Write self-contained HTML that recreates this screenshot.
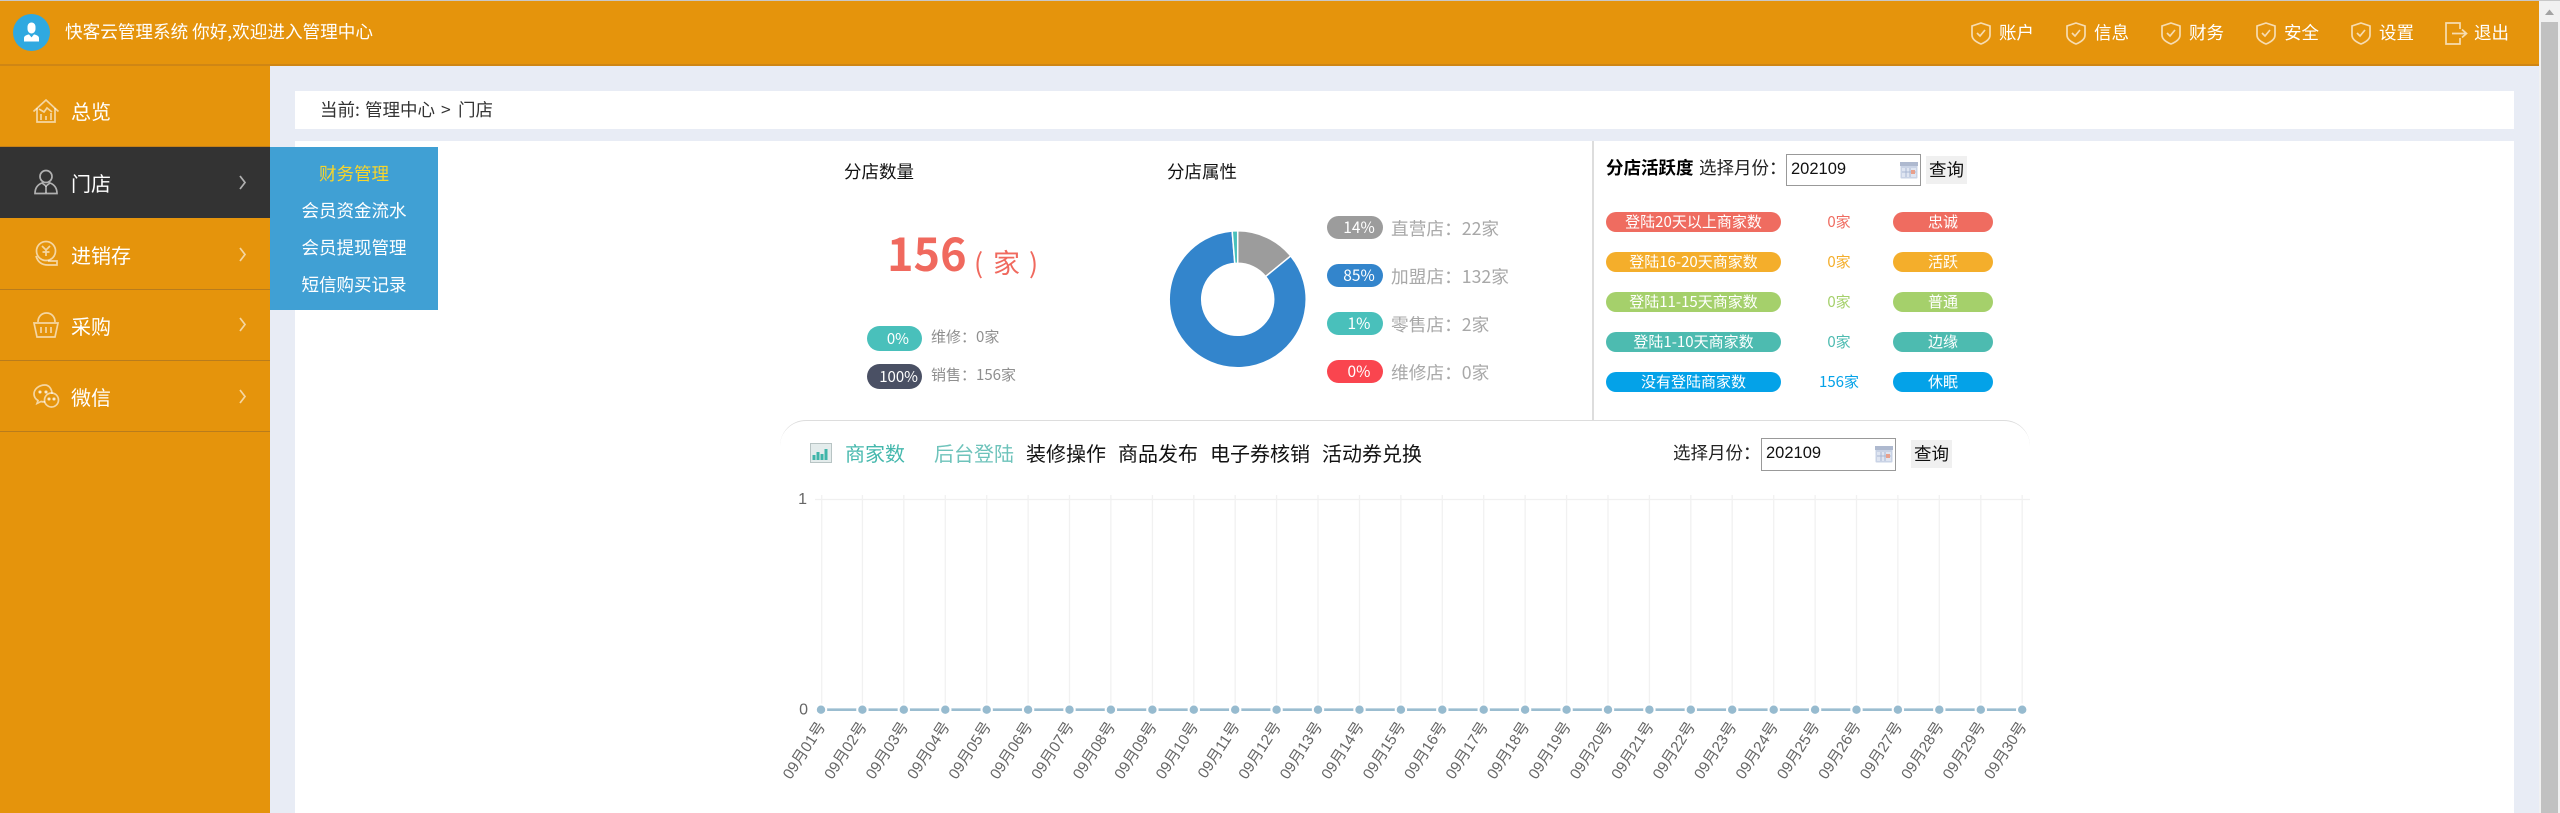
<!DOCTYPE html>
<html lang="zh-CN">
<head>
<meta charset="utf-8">
<title>快客云管理系统</title>
<style>
html,body{margin:0;padding:0}
body{width:2560px;height:813px;position:relative;overflow:hidden;background:#e8ecf5;font-family:"Liberation Sans","Noto Sans CJK SC",sans-serif;font-size:17.5px;color:#111}
.t,.b,svg{position:absolute}
.t{white-space:nowrap;line-height:24px;height:24px}
.c{font-family:"Noto Sans CJK SC","Liberation Sans",sans-serif}
.w{color:#fff}
.m{font-size:20px;color:#fff;left:71px}
.s{font-size:17.5px;color:#fff;left:270px;width:168px;text-align:center}
.n{font-size:17.5px;color:#fff}
.p{position:absolute;color:#fff;text-align:center;white-space:nowrap}
.a{left:1606px;width:175px;height:20px;line-height:20px;border-radius:10px;font-size:15px}
.d{left:1893px;width:100px;height:20px;line-height:20px;border-radius:10px;font-size:15px}
.k{left:1789px;width:100px;text-align:center;font-size:15px}
.l{left:1327px;width:56px;height:23px;line-height:23px;border-radius:12px;font-size:15.5px}
.l span{position:relative;left:4px}
.g{left:1391px;font-size:17.7px;color:#a8a8a8}
.inp{position:absolute;box-sizing:border-box;width:135px;height:32px;border:1.5px solid #999;background:#fff;font-size:16.5px;line-height:29px;padding-left:4px;color:#111}
.btn{position:absolute;width:41px;height:28px;line-height:28px;background:#f0f0f0;text-align:center;font-size:17.5px;color:#111}
.tab{font-size:20px;color:#111}
</style>
</head>
<body>
<div class="b" style="left:0;top:0;width:2560px;height:1px;background:#c8c8c8"></div>
<div class="b" style="left:0;top:1px;width:2539px;height:63px;background:#e5940c"></div>
<div class="b" style="left:0;top:64px;width:2539px;height:2px;background:#cf8614"></div>
<div class="b" style="left:2539px;top:1px;width:21px;height:812px;background:#f1f1f1"></div>
<div class="b" style="left:2541px;top:22px;width:17px;height:791px;background:#c1c1c1"></div>
<svg style="left:2544px;top:9px" width="11" height="7"><path d="M5.5 0.5L10 6H1z" fill="#a3a3a3"/></svg>

<svg style="left:13px;top:14px" width="38" height="38" viewBox="0 0 38 38"><circle cx="18.5" cy="18.5" r="18.5" fill="#2fa9e0"/><path d="M14.500 13c0-6 8-6 8 0v2c0 2.500-2 4.500-4 4.500s-4-2-4-4.500z" fill="#fff"/><path d="M11 27.500v-3.500c0-2 2.500-3 5-3.600l2.500 3 2.500-3c2.500.6 5 1.600 5 3.600v3.500z" fill="#fff"/></svg>
<div class="t c w" style="left:65px;top:20px;font-size:17.6px">快客云管理系统 你好,欢迎进入管理中心</div>

<svg style="left:0;top:0" width="2539" height="66" fill="none" stroke="#fff" stroke-opacity=".68" stroke-width="1.700">
<g><path d="M1981 23l9 3v9c0 4-4 7-9 9c-5-2-9-5-9-9v-9z"/><path d="M1977 33l3 3l5-6"/></g>
<g><path d="M2076 23l9 3v9c0 4-4 7-9 9c-5-2-9-5-9-9v-9z"/><path d="M2072 33l3 3l5-6"/></g>
<g><path d="M2171 23l9 3v9c0 4-4 7-9 9c-5-2-9-5-9-9v-9z"/><path d="M2167 33l3 3l5-6"/></g>
<g><path d="M2266 23l9 3v9c0 4-4 7-9 9c-5-2-9-5-9-9v-9z"/><path d="M2262 33l3 3l5-6"/></g>
<g><path d="M2361 23l9 3v9c0 4-4 7-9 9c-5-2-9-5-9-9v-9z"/><path d="M2357 33l3 3l5-6"/></g>
<path d="M2460 29v-6h-14v21h14v-6"/><path d="M2452 33.500h14M2462 29.500l4.500 4-4.500 4"/>
</svg>
<div class="t c n" style="left:1999px;top:21px">账户</div>
<div class="t c n" style="left:2094px;top:21px">信息</div>
<div class="t c n" style="left:2189px;top:21px">财务</div>
<div class="t c n" style="left:2284px;top:21px">安全</div>
<div class="t c n" style="left:2379px;top:21px">设置</div>
<div class="t c n" style="left:2474px;top:21px">退出</div>

<div class="b" style="left:0;top:66px;width:270px;height:747px;background:#e5940c"></div>
<div class="b" style="left:0;top:146px;width:270px;height:1px;background:#c4801a"></div>
<div class="b" style="left:0;top:147px;width:270px;height:71px;background:#333"></div>
<div class="b" style="left:0;top:289px;width:270px;height:1px;background:#b97c1c"></div>
<div class="b" style="left:0;top:360px;width:270px;height:1px;background:#b97c1c"></div>
<div class="b" style="left:0;top:431px;width:270px;height:1px;background:#b97c1c"></div>

<svg style="left:0;top:66px" width="270" height="370" viewBox="0 66 270 370" fill="none" stroke="#fff" stroke-opacity=".62" stroke-width="1.700">
<path d="M33.500 111.500L46 100l12.500 11.500"/><path d="M37 108v14h18v-14"/><path d="M41 120v-6M46 120v-4M51 120v-7M39 109l5 3 3-4 5 4"/>
<circle cx="46" cy="176.500" r="6"/><path d="M35 193.500c0-6 3-9 7-10.500l4 3 4-3c4 1.500 7 4.500 7 10.500z"/><path d="M46 186v7"/>
<circle cx="46" cy="251" r="9.500"/><path d="M42 246l4 4 4-4M46 250v6M42.500 252h7M36 256c2 7 7 9 12 9h9v-4h-9"/>
<path d="M38 322c0-12 17-12 17 0"/><path d="M34 323h24l-3 14H37z"/><path d="M41 327v6M46 327v6M51 327v6"/>
<path d="M45 385c-6 0-11 4-11 9c0 3 1.500 5 4 6.500l-1 3 4-2c1 .3 2 .4 4 .4"/><path d="M52 394c0-5-3-9-7-9"/><circle cx="51.500" cy="400" r="7"/><circle cx="40" cy="392" r=".8" fill="#fff"/><circle cx="46" cy="392" r=".8" fill="#fff"/><circle cx="49" cy="399" r=".8" fill="#fff"/><circle cx="54" cy="399" r=".8" fill="#fff"/>
<path d="M240 176l5 6.500-5 6.500M240 248l5 6.500-5 6.500M240 318l5 6.500-5 6.500M240 390l5 6.500-5 6.500"/>
</svg>
<div class="t c m" style="top:99px">总览</div>
<div class="t c m" style="top:171px">门店</div>
<div class="t c m" style="top:243px">进销存</div>
<div class="t c m" style="top:314px">采购</div>
<div class="t c m" style="top:385px">微信</div>

<div class="b" style="left:295px;top:91px;width:2219px;height:38px;background:#fff"></div>
<div class="t c" style="left:320px;top:98px;color:#333">当前:</div>
<div class="t c" style="left:365px;top:98px;color:#333">管理中心</div>
<div class="t c" style="left:441px;top:98px;color:#333">&gt;</div>
<div class="t c" style="left:458px;top:98px;color:#333">门店</div>
<div class="b" style="left:295px;top:141px;width:2219px;height:672px;background:#fff"></div>

<div class="b" style="left:270px;top:147px;width:168px;height:163px;background:#40a0d4"></div>
<div class="t c s" style="top:162px;color:#f7d52b">财务管理</div>
<div class="t c s" style="top:199px">会员资金流水</div>
<div class="t c s" style="top:236px">会员提现管理</div>
<div class="t c s" style="top:273px">短信购买记录</div>

<div class="t c" style="left:844px;top:160px">分店数量</div>
<div class="t c" style="left:1167px;top:160px">分店属性</div>
<div class="t c" style="left:887px;top:224px;height:56px;line-height:56px;font-size:45px;font-weight:700;color:#f0695e">156</div>
<div class="t c" style="left:974px;top:246px;height:32px;line-height:32px;font-size:27px;color:#f0695e">(</div>
<div class="t c" style="left:993px;top:246px;height:32px;line-height:32px;font-size:27px;color:#f0695e">家</div>
<div class="t c" style="left:1029px;top:246px;height:32px;line-height:32px;font-size:27px;color:#f0695e">)</div>

<div class="p c" style="left:867px;top:326px;width:42px;padding-right:13px;height:25px;line-height:25px;border-radius:12.500px;background:#49c0bb;font-size:15px;text-align:right">0%</div>
<div class="p c" style="left:867px;top:364px;width:51px;padding-right:4px;height:25px;line-height:25px;border-radius:12.500px;background:#4a5064;font-size:15px;text-align:right">100%</div>
<div class="t c" style="left:931px;top:325px;font-size:15px;color:#8f8f8f">维修：0家</div>
<div class="t c" style="left:931px;top:363px;font-size:15px;color:#8f8f8f">销售：156家</div>

<svg style="left:0;top:0" width="1400" height="400" stroke="#fff" stroke-width="1.500">
<path fill="#9c9c9c" d="M1237.700 230.800A68.500 68.500 0 0 1 1290.760 255.970L1265.590 276.530A36 36 0 0 0 1237.700 263.300Z"/>
<path fill="#3385cc" d="M1290.760 255.970A68.500 68.500 0 1 1 1232.180 231.020L1234.800 263.420A36 36 0 1 0 1265.590 276.530Z"/>
<path fill="#49c0bb" d="M1232.180 231.020A68.500 68.500 0 0 1 1237.700 230.800L1237.700 263.300A36 36 0 0 0 1234.800 263.420Z"/>
</svg>

<div class="p c l" style="top:216px;background:#9c9c9c"><span>14%</span></div>
<div class="p c l" style="top:264px;background:#3385cc"><span>85%</span></div>
<div class="p c l" style="top:312px;background:#49c0bb"><span>1%</span></div>
<div class="p c l" style="top:360px;background:#fa454f"><span>0%</span></div>
<div class="t c g" style="top:216px">直营店：22家</div>
<div class="t c g" style="top:264px">加盟店：132家</div>
<div class="t c g" style="top:312px">零售店：2家</div>
<div class="t c g" style="top:360px">维修店：0家</div>

<div class="b" style="left:1592px;top:141px;width:1.500px;height:279px;background:#ddd"></div>
<div class="t c" style="left:1606px;top:156px;font-weight:700;color:#000">分店活跃度</div>
<div class="t c" style="left:1699px;top:156px;color:#222">选择月份：</div>
<div class="inp" style="left:1786px;top:154px">202109</div>
<svg style="left:1900px;top:162px" width="18" height="17"><rect x=".5" y=".5" width="17" height="16" rx="1" fill="#c9d3e6"/><rect x="0" y="0" width="18" height="4" fill="#aeb9cf"/><path d="M2 6h14v9H2z" fill="#dfe5f1"/><path d="M6 6v9M10 6v9M2 10h14" stroke="#a9b6d2" fill="none"/><rect x="11" y="8" width="4" height="4" fill="#e8a08c"/></svg>
<div class="btn c" style="left:1926px;top:156px">查询</div>

<div class="p c a" style="top:212px;background:#ef6c60">登陆20天以上商家数</div>
<div class="p c a" style="top:252px;background:#f4ae2b">登陆16-20天商家数</div>
<div class="p c a" style="top:292px;background:#a5d06b">登陆11-15天商家数</div>
<div class="p c a" style="top:332px;background:#4dbbb0">登陆1-10天商家数</div>
<div class="p c a" style="top:372px;background:#04a2e8">没有登陆商家数</div>
<div class="t c k" style="top:210px;color:#ef6c60">0家</div>
<div class="t c k" style="top:250px;color:#f4ae2b">0家</div>
<div class="t c k" style="top:290px;color:#a5d06b">0家</div>
<div class="t c k" style="top:330px;color:#4dbbb0">0家</div>
<div class="t c k" style="top:370px;color:#04a2e8">156家</div>
<div class="p c d" style="top:212px;background:#ef6c60">忠诚</div>
<div class="p c d" style="top:252px;background:#f4ae2b">活跃</div>
<div class="p c d" style="top:292px;background:#a5d06b">普通</div>
<div class="p c d" style="top:332px;background:#4dbbb0">边缘</div>
<div class="p c d" style="top:372px;background:#04a2e8">休眠</div>

<div class="b" style="left:780px;top:420px;width:1250px;height:40px;box-sizing:border-box;border-top:1.500px solid #ddd;border-radius:26px 26px 0 0"></div>

<svg style="left:810px;top:443px" width="22" height="20"><rect x=".5" y=".5" width="21" height="19" fill="#e4ecec" stroke="#b8c4c4"/><path d="M4 17v-5M8 17v-8M12 17v-6M16 17v-11" stroke="#3fb5a9" stroke-width="3"/></svg>
<div class="t c tab" style="left:845px;top:441px;color:#45b8ad">商家数</div>
<div class="t c tab" style="left:934px;top:441px;color:#6ec3bb">后台登陆</div>
<div class="t c tab" style="left:1026px;top:441px">装修操作</div>
<div class="t c tab" style="left:1118px;top:441px">商品发布</div>
<div class="t c tab" style="left:1210px;top:441px">电子券核销</div>
<div class="t c tab" style="left:1322px;top:441px">活动券兑换</div>

<div class="t c" style="left:1673px;top:441px;color:#222">选择月份：</div>
<div class="inp" style="left:1761px;top:438px;height:33px">202109</div>
<svg style="left:1875px;top:446px" width="18" height="17"><rect x=".5" y=".5" width="17" height="16" rx="1" fill="#c9d3e6"/><rect x="0" y="0" width="18" height="4" fill="#aeb9cf"/><path d="M2 6h14v9H2z" fill="#dfe5f1"/><path d="M6 6v9M10 6v9M2 10h14" stroke="#a9b6d2" fill="none"/><rect x="11" y="8" width="4" height="4" fill="#e8a08c"/></svg>
<div class="btn c" style="left:1911px;top:440px">查询</div>

<svg style="left:0;top:0" width="2539" height="813" font-family="'Liberation Sans','Noto Sans CJK SC',sans-serif">
<path d="M815 499.500H2030" stroke="#f0f0f0" stroke-width="1.200"/>
<path stroke="#f1f1f1" stroke-width="1.300" fill="none" d="M821.700 495V705M862.400 495V705M903.800 495V705M945.300 495V705M986.700 495V705M1028.100 495V705M1069.500 495V705M1110.900 495V705M1152.400 495V705M1193.800 495V705M1235.200 495V705M1276.600 495V705M1318 495V705M1359.500 495V705M1400.900 495V705M1442.300 495V705M1483.700 495V705M1525.100 495V705M1566.600 495V705M1608 495V705M1649.400 495V705M1690.800 495V705M1732.200 495V705M1773.700 495V705M1815.100 495V705M1856.500 495V705M1897.900 495V705M1939.300 495V705M1980.800 495V705M2022.200 495V705"/>
<text x="807" y="504" font-size="16" fill="#666" text-anchor="end">1</text>
<text x="808" y="714.500" font-size="16" fill="#666" text-anchor="end">0</text>
<path d="M821 709.700H2022.200" stroke="#9bbdd0" stroke-width="2.600"/>
<g fill="#97bbcf" stroke="#fff" stroke-width="2">
<circle cx="821" cy="709.700" r="5.200"/><circle cx="862.400" cy="709.700" r="5.200"/><circle cx="903.800" cy="709.700" r="5.200"/><circle cx="945.300" cy="709.700" r="5.200"/><circle cx="986.700" cy="709.700" r="5.200"/><circle cx="1028.100" cy="709.700" r="5.200"/><circle cx="1069.500" cy="709.700" r="5.200"/><circle cx="1110.900" cy="709.700" r="5.200"/><circle cx="1152.400" cy="709.700" r="5.200"/><circle cx="1193.800" cy="709.700" r="5.200"/><circle cx="1235.200" cy="709.700" r="5.200"/><circle cx="1276.600" cy="709.700" r="5.200"/><circle cx="1318" cy="709.700" r="5.200"/><circle cx="1359.500" cy="709.700" r="5.200"/><circle cx="1400.900" cy="709.700" r="5.200"/><circle cx="1442.300" cy="709.700" r="5.200"/><circle cx="1483.700" cy="709.700" r="5.200"/><circle cx="1525.100" cy="709.700" r="5.200"/><circle cx="1566.600" cy="709.700" r="5.200"/><circle cx="1608" cy="709.700" r="5.200"/><circle cx="1649.400" cy="709.700" r="5.200"/><circle cx="1690.800" cy="709.700" r="5.200"/><circle cx="1732.200" cy="709.700" r="5.200"/><circle cx="1773.700" cy="709.700" r="5.200"/><circle cx="1815.100" cy="709.700" r="5.200"/><circle cx="1856.500" cy="709.700" r="5.200"/><circle cx="1897.900" cy="709.700" r="5.200"/><circle cx="1939.300" cy="709.700" r="5.200"/><circle cx="1980.800" cy="709.700" r="5.200"/><circle cx="2022.200" cy="709.700" r="5.200"/>
</g>
<g font-size="15.300" fill="#666" text-anchor="end">
<text transform="translate(826,726) rotate(-57)">09月01号</text>
<text transform="translate(867.400,726) rotate(-57)">09月02号</text>
<text transform="translate(908.800,726) rotate(-57)">09月03号</text>
<text transform="translate(950.300,726) rotate(-57)">09月04号</text>
<text transform="translate(991.700,726) rotate(-57)">09月05号</text>
<text transform="translate(1033.100,726) rotate(-57)">09月06号</text>
<text transform="translate(1074.500,726) rotate(-57)">09月07号</text>
<text transform="translate(1115.900,726) rotate(-57)">09月08号</text>
<text transform="translate(1157.400,726) rotate(-57)">09月09号</text>
<text transform="translate(1198.800,726) rotate(-57)">09月10号</text>
<text transform="translate(1240.200,726) rotate(-57)">09月11号</text>
<text transform="translate(1281.600,726) rotate(-57)">09月12号</text>
<text transform="translate(1323,726) rotate(-57)">09月13号</text>
<text transform="translate(1364.500,726) rotate(-57)">09月14号</text>
<text transform="translate(1405.900,726) rotate(-57)">09月15号</text>
<text transform="translate(1447.300,726) rotate(-57)">09月16号</text>
<text transform="translate(1488.700,726) rotate(-57)">09月17号</text>
<text transform="translate(1530.100,726) rotate(-57)">09月18号</text>
<text transform="translate(1571.600,726) rotate(-57)">09月19号</text>
<text transform="translate(1613,726) rotate(-57)">09月20号</text>
<text transform="translate(1654.400,726) rotate(-57)">09月21号</text>
<text transform="translate(1695.800,726) rotate(-57)">09月22号</text>
<text transform="translate(1737.200,726) rotate(-57)">09月23号</text>
<text transform="translate(1778.700,726) rotate(-57)">09月24号</text>
<text transform="translate(1820.100,726) rotate(-57)">09月25号</text>
<text transform="translate(1861.500,726) rotate(-57)">09月26号</text>
<text transform="translate(1902.900,726) rotate(-57)">09月27号</text>
<text transform="translate(1944.300,726) rotate(-57)">09月28号</text>
<text transform="translate(1985.800,726) rotate(-57)">09月29号</text>
<text transform="translate(2027.200,726) rotate(-57)">09月30号</text>
</g>
</svg>
</body>
</html>
